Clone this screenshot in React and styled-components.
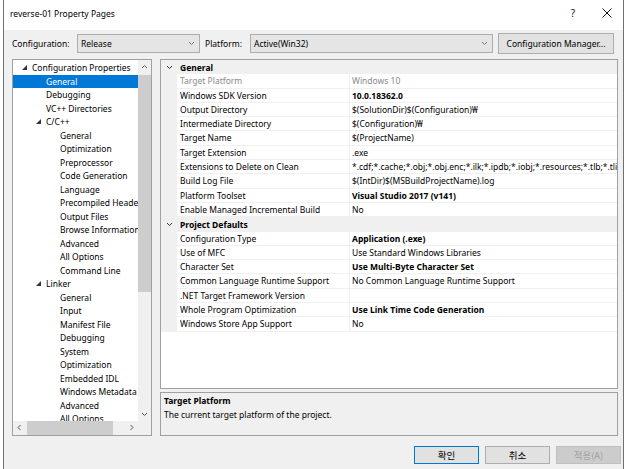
import React from 'react';
import styled, { createGlobalStyle } from 'styled-components';

const GlobalStyle = createGlobalStyle`
  html, body {
    margin: 0;
    padding: 0;
    background: #ffffff;
  }
  body {
    font-family: "Noto Sans", "Noto Sans CJK KR", sans-serif;
    font-size: 8.5px;
    color: #000;
  }
`;

const Screen = styled.div`
  width: 627px;
  height: 469px;
  display: flex;
  overflow: hidden;
  background: #ffffff;
`;

const Window = styled.div`
  margin-left: 3px;
  width: 621px;
  height: 469px;
  box-sizing: border-box;
  border-left: 1px solid #707070;
  border-right: 1px solid #707070;
  background: #f0f0f0;
  display: flex;
  flex-direction: column;
`;

const TitleBar = styled.div`
  height: 30px;
  box-sizing: border-box;
  padding: 0 0 4px 6px;
  flex: none;
  background: #ffffff;
  display: flex;
  align-items: center;
`;

const TitleText = styled.div`
  flex: 1;
  font-size: 8.5px;
`;

const CaptionButton = styled.div`
  width: ${({ w }) => w}px;
  height: 26px;
  display: flex;
  align-items: center;
  justify-content: center;
  font-size: 10px;
  color: #111;
`;

const Toolbar = styled.div`
  margin-top: 3px;
  height: 21px;
  padding-left: 8px;
  display: flex;
  align-items: center;
  flex: none;
`;

const Label = styled.div`
  width: ${({ w }) => w}px;
  margin-left: ${({ ml }) => ml || 0}px;
  flex: none;
`;

const Select = styled.div`
  width: ${({ w }) => w}px;
  height: 19px;
  box-sizing: border-box;
  border: 1px solid #adadad;
  background: #e5e5e5;
  display: flex;
  align-items: center;
  padding: 0 4px 0 3px;
  flex: none;
`;

const SelectText = styled.div`
  flex: 1;
`;

const PushButton = styled.div`
  width: ${({ w }) => w}px;
  height: ${({ h }) => h || 19}px;
  margin-left: ${({ ml }) => ml || 0}px;
  box-sizing: border-box;
  border: 1px solid ${({ $default, $disabled }) => ($default ? '#0078d7' : $disabled ? '#bfbfbf' : '#adadad')};
  background: ${({ $disabled }) => ($disabled ? '#cccccc' : '#e1e1e1')};
  color: ${({ $disabled }) => ($disabled ? '#a0a0a0' : '#000')};
  display: flex;
  align-items: center;
  justify-content: center;
  flex: none;
`;

const Main = styled.div`
  margin-top: 5px;
  height: 377px;
  padding: 0 0 0 8px;
  display: flex;
  gap: 8px;
  flex: none;
`;

const Tree = styled.div`
  width: 140px;
  height: 377px;
  box-sizing: border-box;
  border: 1px solid #a0a0a0;
  background: #ffffff;
  display: grid;
  grid-template-columns: 1fr 13px;
  grid-template-rows: 1fr 14px;
`;

const TreeList = styled.div`
  overflow: hidden;
  padding-top: 1px;
`;

const TreeRow = styled.div`
  height: 13.5px;
  line-height: 13.5px;
  display: flex;
  align-items: center;
  padding-left: ${({ level }) => 9 + level * 14}px;
  background: ${({ selected }) => (selected ? '#0078d7' : 'transparent')};
  color: ${({ selected }) => (selected ? '#ffffff' : '#000')};
  white-space: nowrap;
`;

const Toggle = styled.div`
  width: 10px;
  height: 13px;
  flex: none;
  display: flex;
  align-items: center;
`;

const VScroll = styled.div`
  background: #f0f0f0;
  display: flex;
  flex-direction: column;
`;

const ScrollArrow = styled.div`
  width: 13px;
  height: 13px;
  flex: none;
  display: flex;
  align-items: center;
  justify-content: center;
`;

const VThumb = styled.div`
  margin-top: 2px;
  height: 217px;
  background: #cdcdcd;
  flex: none;
`;

const Spacer = styled.div`
  flex: 1;
`;

const HScroll = styled.div`
  background: #f0f0f0;
  display: flex;
  align-items: stretch;
`;

const HThumb = styled.div`
  width: 86px;
  margin-left: 1px;
  background: #cdcdcd;
  flex: none;
`;

const Corner = styled.div`
  background: #f0f0f0;
`;

const RightColumn = styled.div`
  width: 458px;
  display: flex;
  flex-direction: column;
  gap: 3px;
`;

const Grid = styled.div`
  height: 330px;
  box-sizing: border-box;
  border: 1px solid #a0a0a0;
  background: #ffffff;
  overflow: hidden;
  flex: none;
`;

const CategoryRow = styled.div`
  height: 14.3px;
  display: flex;
  align-items: center;
  background: #f0f0f0;
  font-weight: bold;
  white-space: nowrap;
`;

const Gutter = styled.div`
  width: 16px;
  height: 100%;
  flex: none;
  background: #f0f0f0;
  display: flex;
  align-items: center;
  justify-content: center;
`;

const CategoryText = styled.div`
  padding-left: 3px;
`;

const PropRow = styled.div`
  height: 14.3px;
  display: flex;
  white-space: nowrap;
  color: ${({ disabled }) => (disabled ? '#8a8a8a' : '#000')};
`;

const NameCell = styled.div`
  width: 173px;
  flex: none;
  box-sizing: border-box;
  border-bottom: 1px solid #f0f0f0;
  border-right: 1px solid #f0f0f0;
  padding-left: 3px;
  line-height: 13.3px;
  overflow: hidden;
`;

const ValueCell = styled.div`
  flex: 1;
  min-width: 0;
  box-sizing: border-box;
  border-bottom: 1px solid #f0f0f0;
  padding-left: 2px;
  line-height: 13.3px;
  overflow: hidden;
  font-weight: ${({ bold }) => (bold ? 'bold' : 'normal')};
`;

const Description = styled.div`
  height: 44px;
  box-sizing: border-box;
  border: 1px solid #a0a0a0;
  background: #f0f0f0;
  padding: 1px 3px;
  line-height: 13.5px;
  flex: none;
`;

const DescTitle = styled.div`
  font-weight: bold;
`;

const Footer = styled.div`
  margin-top: 10px;
  height: 18px;
  display: flex;
  justify-content: flex-end;
  gap: 6px;
  padding-right: 2px;
  font-family: "Noto Sans CJK KR", "Noto Sans", sans-serif;
  font-size: 9.5px;
`;

const Triangle = () => (
  <svg width="5" height="5" viewBox="0 0 5 5">
    <polygon points="5,0 5,5 0,5" fill="#333" />
  </svg>
);

const Chevron = ({ dir = 'down', color = '#444', size = 7 }) => {
  const pts = {
    down: '1,2 3.5,4.5 6,2',
    up: '1,5 3.5,2.5 6,5',
    left: '4.5,1 2,3.5 4.5,6',
    right: '2.5,1 5,3.5 2.5,6',
  }[dir];
  return (
    <svg width={size} height={size} viewBox="0 0 7 7">
      <polyline points={pts} fill="none" stroke={color} strokeWidth="1" />
    </svg>
  );
};

const CloseIcon = () => (
  <svg width="10" height="10" viewBox="0 0 10 10">
    <path d="M0.5 0.5 L9.5 9.5 M9.5 0.5 L0.5 9.5" stroke="#111" strokeWidth="1" />
  </svg>
);

const treeItems = [
  { label: 'Configuration Properties', level: 0, open: true },
  { label: 'General', level: 1, selected: true },
  { label: 'Debugging', level: 1 },
  { label: 'VC++ Directories', level: 1 },
  { label: 'C/C++', level: 1, open: true },
  { label: 'General', level: 2 },
  { label: 'Optimization', level: 2 },
  { label: 'Preprocessor', level: 2 },
  { label: 'Code Generation', level: 2 },
  { label: 'Language', level: 2 },
  { label: 'Precompiled Headers', level: 2 },
  { label: 'Output Files', level: 2 },
  { label: 'Browse Information', level: 2 },
  { label: 'Advanced', level: 2 },
  { label: 'All Options', level: 2 },
  { label: 'Command Line', level: 2 },
  { label: 'Linker', level: 1, open: true },
  { label: 'General', level: 2 },
  { label: 'Input', level: 2 },
  { label: 'Manifest File', level: 2 },
  { label: 'Debugging', level: 2 },
  { label: 'System', level: 2 },
  { label: 'Optimization', level: 2 },
  { label: 'Embedded IDL', level: 2 },
  { label: 'Windows Metadata', level: 2 },
  { label: 'Advanced', level: 2 },
  { label: 'All Options', level: 2 },
];

const sections = [
  {
    title: 'General',
    rows: [
      { name: 'Target Platform', value: 'Windows 10', disabled: true },
      { name: 'Windows SDK Version', value: '10.0.18362.0', bold: true },
      { name: 'Output Directory', value: '$(SolutionDir)$(Configuration)₩' },
      { name: 'Intermediate Directory', value: '$(Configuration)₩' },
      { name: 'Target Name', value: '$(ProjectName)' },
      { name: 'Target Extension', value: '.exe' },
      {
        name: 'Extensions to Delete on Clean',
        value:
          '*.cdf;*.cache;*.obj;*.obj.enc;*.ilk;*.ipdb;*.iobj;*.resources;*.tlb;*.tli;*.tlh;*.tmp;*.rsp;*.pgc;*.pgd;*.meta;*.tlog;*.manifest;*.res;*.pch;*.exp;*.idb',
      },
      { name: 'Build Log File', value: '$(IntDir)$(MSBuildProjectName).log' },
      { name: 'Platform Toolset', value: 'Visual Studio 2017 (v141)', bold: true },
      { name: 'Enable Managed Incremental Build', value: 'No' },
    ],
  },
  {
    title: 'Project Defaults',
    rows: [
      { name: 'Configuration Type', value: 'Application (.exe)', bold: true },
      { name: 'Use of MFC', value: 'Use Standard Windows Libraries' },
      { name: 'Character Set', value: 'Use Multi-Byte Character Set', bold: true },
      { name: 'Common Language Runtime Support', value: 'No Common Language Runtime Support' },
      { name: '.NET Target Framework Version', value: '' },
      { name: 'Whole Program Optimization', value: 'Use Link Time Code Generation', bold: true },
      { name: 'Windows Store App Support', value: 'No' },
    ],
  },
];

const App = () => {
  return (
    <Screen>
      <GlobalStyle />
      <Window>
        <TitleBar>
          <TitleText>reverse-01 Property Pages</TitleText>
          <CaptionButton w={34}>?</CaptionButton>
          <CaptionButton w={33}>
            <CloseIcon />
          </CaptionButton>
        </TitleBar>

        <Toolbar>
          <Label w={65}>Configuration:</Label>
          <Select w={123}>
            <SelectText>Release</SelectText>
            <Chevron color="#777" />
          </Select>
          <Label w={45} ml={5}>Platform:</Label>
          <Select w={243}>
            <SelectText>Active(Win32)</SelectText>
            <Chevron color="#777" />
          </Select>
          <PushButton w={116} h={21} ml={5}>Configuration Manager...</PushButton>
        </Toolbar>

        <Main>
          <Tree>
            <TreeList>
              {treeItems.map((item, i) => (
                <TreeRow key={i} level={item.level} selected={item.selected}>
                  <Toggle>{item.open && <Triangle />}</Toggle>
                  {item.label}
                </TreeRow>
              ))}
            </TreeList>
            <VScroll>
              <ScrollArrow>
                <Chevron dir="up" color="#555" />
              </ScrollArrow>
              <VThumb />
              <Spacer />
              <ScrollArrow>
                <Chevron dir="down" color="#555" />
              </ScrollArrow>
            </VScroll>
            <HScroll>
              <ScrollArrow>
                <Chevron dir="left" color="#555" />
              </ScrollArrow>
              <HThumb />
              <Spacer />
              <ScrollArrow>
                <Chevron dir="right" color="#555" />
              </ScrollArrow>
            </HScroll>
            <Corner />
          </Tree>

          <RightColumn>
            <Grid>
              {sections.map((section) => (
                <React.Fragment key={section.title}>
                  <CategoryRow>
                    <Gutter>
                      <Chevron color="#333" />
                    </Gutter>
                    <CategoryText>{section.title}</CategoryText>
                  </CategoryRow>
                  {section.rows.map((row) => (
                    <PropRow key={row.name} disabled={row.disabled}>
                      <Gutter />
                      <NameCell>{row.name}</NameCell>
                      <ValueCell bold={row.bold}>{row.value}</ValueCell>
                    </PropRow>
                  ))}
                </React.Fragment>
              ))}
            </Grid>
            <Description>
              <DescTitle>Target Platform</DescTitle>
              <div>The current target platform of the project.</div>
            </Description>
          </RightColumn>
        </Main>

        <Footer>
          <PushButton w={65} h={18} $default>확인</PushButton>
          <PushButton w={65} h={18}>취소</PushButton>
          <PushButton w={65} h={18} $disabled>적용(A)</PushButton>
        </Footer>
      </Window>
    </Screen>
  );
};

export default App;
